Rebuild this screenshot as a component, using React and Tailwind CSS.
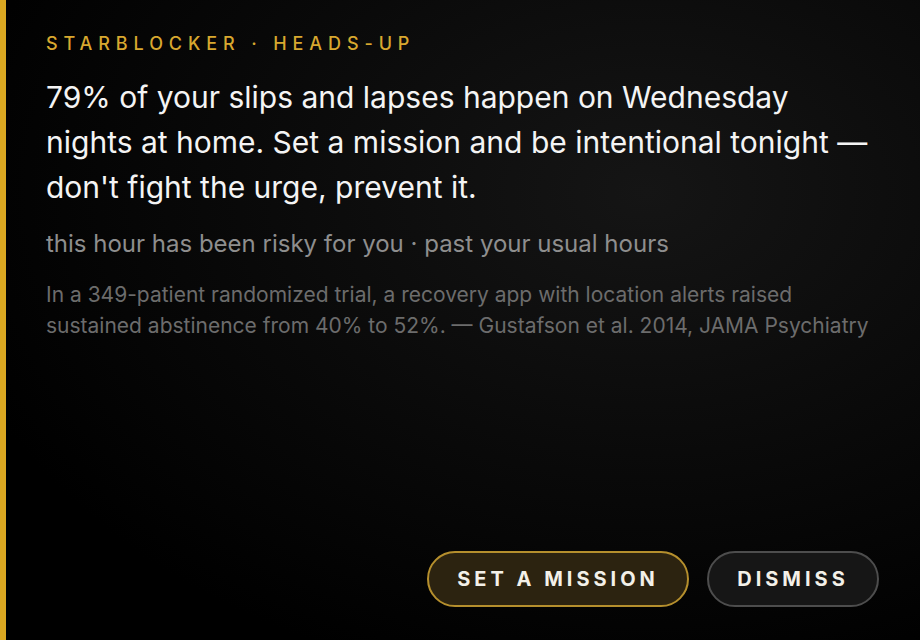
export default function App() {
  return (
    <div className="flex h-[640px] w-[920px] bg-black font-['Inter','Noto_Sans',sans-serif]">
      {/* Accent bar */}
      <div className="w-[6px] shrink-0 bg-[#dba821]" />

      <div className="flex flex-1 flex-col bg-[radial-gradient(ellipse_at_70%_30%,#151515_0%,#090909_45%,#000000_80%)] pl-[40px] pr-[41px] pt-[32px] pb-[33px]">
        <p className="text-[18px] font-medium uppercase leading-[24px] tracking-[5.9px] text-[#d8a82f]">
          Starblocker · Heads-up
        </p>

        <h1 className="mt-[19px] text-[30px] font-normal leading-[45px] text-[#f4f4f4]">
          79% of your slips and lapses happen on Wednesday nights at home. Set a mission and be intentional tonight — don't fight the urge, prevent it.
        </h1>

        <p className="mt-[18px] text-[24px] leading-[32px] text-[#8e8e8e]">
          this hour has been risky for you · past your usual hours
        </p>

        <p className="mt-[19px] text-[21px] leading-[31px] text-[#6c6c6c]">
          In a 349-patient randomized trial, a recovery app with location alerts raised sustained abstinence from 40% to 52%. — Gustafson et al. 2014, JAMA Psychiatry
        </p>

        <div className="mt-auto flex justify-end gap-[18px]">
          <button className="h-[56px] w-[262px] rounded-full border-2 border-[#b58f2d] bg-[#2c2310] text-[20px] font-bold uppercase tracking-[4px] text-[#f3f0e8]">
            Set a mission
          </button>
          <button className="h-[56px] w-[172px] rounded-full border-2 border-[#4d4d4d] bg-[#161616] text-[20px] font-bold uppercase tracking-[4px] text-[#f3f0e8]">
            Dismiss
          </button>
        </div>
      </div>
    </div>
  );
}
